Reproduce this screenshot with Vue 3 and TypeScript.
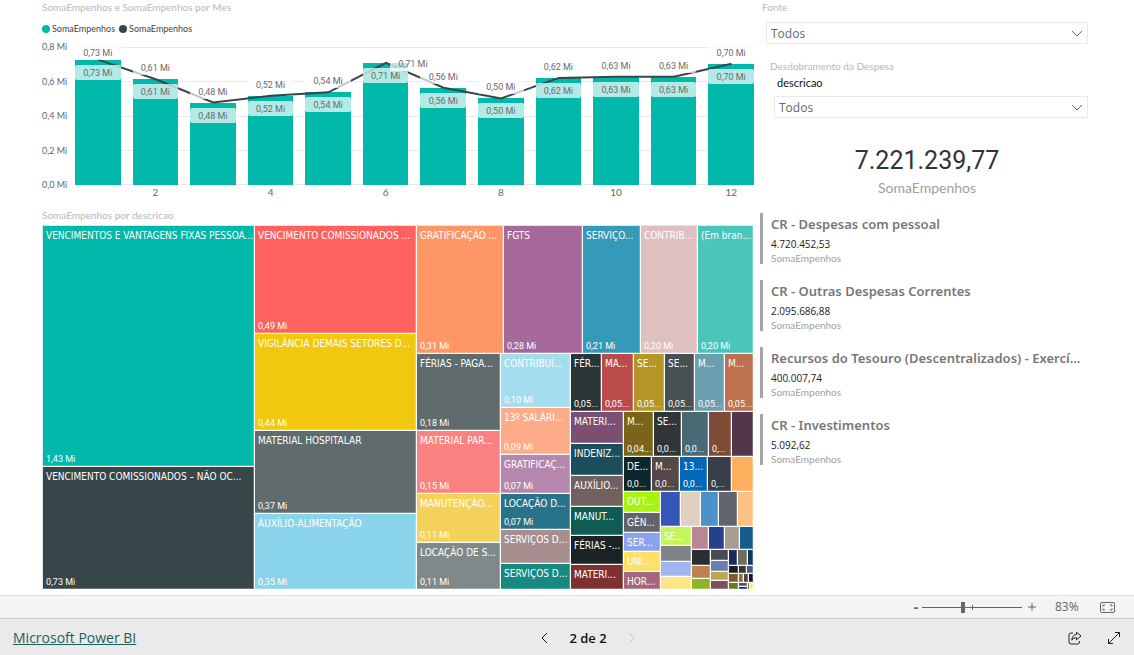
<script setup lang="ts">
import { computed, h, ref, type FunctionalComponent } from 'vue'

interface Leaf {
  size: number
  color: string
  name?: string
  value?: string
}
interface Group {
  size: number
  dir: 'row' | 'col'
  items: TreeNode[]
}
type TreeNode = Leaf | Group

const cell = (size: number, color: string, name?: string, value?: string): Leaf => ({ size, color, name, value })
const row = (size: number, ...items: TreeNode[]): Group => ({ size, dir: 'row', items })
const col = (size: number, ...items: TreeNode[]): Group => ({ size, dir: 'col', items })

const tinyCells = col(25,
  row(16, cell(9, '#1e2a5e'), cell(10, '#736a64'), cell(6, '#0d3a5c')),
  row(8, cell(10, '#1b1f26'), cell(8, '#33363c'), cell(7, '#4a5a85')),
  row(9, cell(10, '#805a33'), cell(5, '#8a7a30'), cell(5, '#5a3a44'), cell(5, '#0f1830')),
  row(7, cell(10, '#617d16'), col(9, cell(4, '#52565a'), cell(3, '#0f1fc4')), cell(2, '#3a3f70'), cell(4, '#f7f25c')),
)

const smallCells = col(62,
  row(23, cell(17, '#b88696'), cell(16, '#27408b'), cell(15, '#a89b90'), cell(14, '#175a8c')),
  row(40,
    col(19, cell(16, '#2a2e37'), cell(13, '#bd834a'), cell(11, '#8db526')),
    col(18, cell(11, '#484b54'), cell(11, '#6a7cb4'), cell(9, '#bda850'), cell(9, '#7d4f5e')),
    tinyCells,
  ),
)

const tree = row(1,
  col(212,
    cell(241, '#01b8aa', 'VENCIMENTOS E VANTAGENS FIXAS PESSOA...', '1,43 Mi'),
    cell(123, '#374649', 'VENCIMENTO COMISSIONADOS – NÃO OC...', '0,73 Mi'),
  ),
  col(162,
    cell(108, '#fd625e', 'VENCIMENTO COMISSIONADOS ...', '0,49 Mi'),
    cell(97, '#f2c80f', 'VIGILÂNCIA DEMAIS SETORES D...', '0,44 Mi'),
    cell(83, '#5f6b6d', 'MATERIAL HOSPITALAR', '0,37 Mi'),
    cell(76, '#8ad4eb', 'AUXÍLIO-ALIMENTAÇÃO', '0,35 Mi'),
  ),
  col(337,
    row(128,
      cell(87, '#fe9666', 'GRATIFICAÇÃO ...', '0,31 Mi'),
      cell(79, '#a66999', 'FGTS', '0,28 Mi'),
      cell(58, '#3599b8', 'SERVIÇO...', '0,21 Mi'),
      cell(57, '#dfbfbf', 'CONTRIB...', '0,20 Mi'),
      cell(56, '#4ac5bb', '(Em bran...', '0,20 Mi'),
    ),
    row(236,
      col(84,
        cell(77, '#5f6b6d', 'FÉRIAS - PAGA...', '0,18 Mi'),
        cell(63, '#fb8281', 'MATERIAL PAR...', '0,15 Mi'),
        cell(49, '#f4d25a', 'MANUTENÇÃO...', '0,11 Mi'),
        cell(47, '#7f898a', 'LOCAÇÃO DE S...', '0,11 Mi'),
      ),
      col(70,
        cell(54, '#a4ddee', 'CONTRIBUI...', '0,10 Mi'),
        cell(47, '#fdab89', '13º SALÁRI...', '0,09 Mi'),
        cell(39, '#b687ac', 'GRATIFICAÇ...', '0,07 Mi'),
        cell(36, '#28738a', 'LOCAÇÃO D...', '0,07 Mi'),
        cell(34, '#a78f8f', 'SERVIÇOS D...'),
        cell(26, '#168980', 'SERVIÇOS D...'),
      ),
      col(183,
        row(58,
          cell(31, '#293537', 'FÉR...', '0,05...'),
          cell(32, '#bb4a4a', 'MA...', '0,05...'),
          cell(31, '#b59525', 'SE...', '0,05...'),
          cell(30, '#475052', 'SE...', '0,05...'),
          cell(30, '#6a9fb0', 'M...', '0,05...'),
          cell(29, '#bd7150', 'M...', '0,05...'),
        ),
        row(178,
          col(53,
            cell(32, '#7b4f71', 'MATERI...'),
            cell(32, '#1b4d5c', 'INDENIZ...'),
            cell(31, '#706060', 'AUXÍLIO...'),
            cell(29, '#0f5c55', 'MANUT...'),
            cell(29, '#1c2325', 'FÉRIAS -...'),
            cell(25, '#7d3231', 'MATERI...'),
          ),
          col(130,
            row(45,
              cell(30, '#796419', 'M...', '0,04...'),
              cell(28, '#303637', 'SE...', '0,0...'),
              cell(27, '#476a75', '', '0,0...'),
              cell(23, '#7e4b36', '', '0,...'),
              cell(22, '#53354c'),
            ),
            row(35,
              cell(28, '#0e262e', 'DE...', '0,0...'),
              cell(28, '#544848', 'M...', '0,0...'),
              cell(28, '#0368b9', '13...', '0,0...'),
              cell(24, '#383d49', '', '0,...'),
              cell(22, '#ffb05f'),
            ),
            row(98,
              col(37,
                cell(21, '#a8f312', 'OUT...'),
                cell(20, '#60646d', 'GÊN...'),
                cell(19, '#8ba3ec', 'SER...'),
                cell(20, '#ffe066', 'UNI...'),
                cell(18, '#a6677c', 'HOR...'),
              ),
              col(93,
                row(35,
                  cell(20, '#3557b8'),
                  cell(20, '#dfd0c0'),
                  cell(18, '#4a92c8'),
                  cell(19, '#5f646d'),
                  cell(16, '#ffc083'),
                ),
                row(63,
                  col(31,
                    cell(19, '#c6f558', 'SE...'),
                    cell(16, '#7f8489'),
                    cell(15, '#a3b5ef'),
                    cell(13, '#ffe488'),
                  ),
                  smallCells,
                ),
              ),
            ),
          ),
        ),
      ),
    ),
  ),
)

const MapNode: FunctionalComponent<{ node: TreeNode }> = ({ node }) => {
  if ('items' in node) {
    const tracks = node.items.map((n) => `minmax(0, ${n.size}fr)`).join(' ')
    return h(
      'div',
      {
        class: 'group',
        style: node.dir === 'row' ? { gridTemplateColumns: tracks } : { gridTemplateRows: tracks },
      },
      node.items.map((n) => h(MapNode, { node: n })),
    )
  }
  return h('div', { class: 'leaf', style: { backgroundColor: node.color } }, [
    node.name ? h('span', { class: 'leaf-name' }, node.name) : null,
    node.value ? h('span', { class: 'leaf-value' }, node.value) : null,
  ])
}
MapNode.props = ['node']

const months = [
  { value: 0.727, label: '0,73 Mi', place: 'low' },
  { value: 0.613, label: '0,61 Mi', place: '' },
  { value: 0.478, label: '0,48 Mi', place: '' },
  { value: 0.518, label: '0,52 Mi', place: '' },
  { value: 0.537, label: '0,54 Mi', place: '' },
  { value: 0.708, label: '0,71 Mi', place: 'side' },
  { value: 0.564, label: '0,56 Mi', place: '' },
  { value: 0.502, label: '0,50 Mi', place: '' },
  { value: 0.621, label: '0,62 Mi', place: '' },
  { value: 0.628, label: '0,63 Mi', place: '' },
  { value: 0.627, label: '0,63 Mi', place: '' },
  { value: 0.703, label: '0,70 Mi', place: '' },
]
const maxValue = 0.8
const ticks = ['0,8 Mi', '0,6 Mi', '0,4 Mi', '0,2 Mi', '0,0 Mi']
const percent = (v: number) => `${(v / maxValue) * 100}%`

const linePoints = computed(() =>
  months.map((m, i) => `${23 + i * 57.5},${100 - (m.value / maxValue) * 100}`).join(' '),
)

const cards = [
  { title: 'CR - Despesas com pessoal', value: '4.720.452,53' },
  { title: 'CR - Outras Despesas Correntes', value: '2.095.686,88' },
  { title: 'Recursos do Tesouro (Descentralizados) - Exercí...', value: '400.007,74' },
  { title: 'CR - Investimentos', value: '5.092,62' },
]

const fonte = ref('Todos')
const descricao = ref('Todos')
const zoom = ref(41)
</script>

<template>
  <div class="page">
    <main class="report">
      <div class="visuals">
        <section class="chart">
          <h2 class="title">SomaEmpenhos e SomaEmpenhos por Mes</h2>
          <div class="legend">
            <span class="key"><i class="dot teal"></i>SomaEmpenhos</span>
            <span class="key"><i class="dot dark"></i>SomaEmpenhos</span>
          </div>
          <div class="chart-body">
            <div class="y-axis">
              <span v-for="t in ticks" :key="t">{{ t }}</span>
            </div>
            <div class="plot">
              <div class="gridlines"><i v-for="t in ticks" :key="t"></i></div>
              <div class="columns">
                <div v-for="(m, i) in months" :key="i" class="column">
                  <div class="bar" :style="{ height: percent(m.value) }">
                    <span class="band">{{ m.label }}</span>
                  </div>
                  <span class="point-label" :class="m.place" :style="{ bottom: percent(m.value) }">{{ m.label }}</span>
                </div>
              </div>
              <svg class="line" viewBox="0 0 678 100" preserveAspectRatio="none" aria-hidden="true">
                <polyline :points="linePoints" />
              </svg>
            </div>
          </div>
          <div class="x-axis">
            <span v-for="(m, i) in months" :key="i">{{ i % 2 ? i + 1 : '' }}</span>
          </div>
        </section>

        <section class="treemap">
          <h2 class="title">SomaEmpenhos por descricao</h2>
          <div class="map">
            <MapNode :node="tree" />
          </div>
        </section>
      </div>

      <aside class="side">
        <div class="slicer">
          <label class="title" for="fonte">Fonte</label>
          <div class="select-box">
            <select id="fonte" v-model="fonte"><option>Todos</option></select>
            <svg class="caret" viewBox="0 0 12 7" aria-hidden="true"><path d="M1 1l5 5 5-5" /></svg>
          </div>
        </div>
        <div class="slicer nested">
          <h2 class="title">Desdobramento da Despesa</h2>
          <label class="field" for="descricao">descricao</label>
          <div class="select-box">
            <select id="descricao" v-model="descricao"><option>Todos</option></select>
            <svg class="caret" viewBox="0 0 12 7" aria-hidden="true"><path d="M1 1l5 5 5-5" /></svg>
          </div>
        </div>
        <div class="total">
          <span class="total-value">7.221.239,77</span>
          <span class="total-label">SomaEmpenhos</span>
        </div>
        <ul class="cards">
          <li v-for="c in cards" :key="c.title" class="card">
            <h3>{{ c.title }}</h3>
            <span class="card-value">{{ c.value }}</span>
            <span class="card-label">SomaEmpenhos</span>
          </li>
        </ul>
      </aside>
    </main>

    <div class="zoom-bar">
      <button type="button" class="step" aria-label="Reduzir">-</button>
      <div class="range">
        <input v-model="zoom" type="range" min="0" max="100" aria-label="Zoom" />
      </div>
      <button type="button" class="step plus" aria-label="Ampliar">
        <svg width="8" height="8" viewBox="0 0 8 8"><path d="M4 0v8M0 4h8" /></svg>
      </button>
      <span class="percent">83%</span>
      <button type="button" class="fit" aria-label="Ajustar à página">
        <svg width="15" height="11" viewBox="0 0 15 11">
          <rect x="0.5" y="0.5" width="14" height="10" rx="1.5" />
          <path d="M3 4.500V3h2M10 3h2v1.500M12 6.500V8h-2M5 8H3V6.500" />
        </svg>
      </button>
    </div>

    <footer class="footer">
      <a href="#">Microsoft Power BI</a>
      <nav class="pager">
        <button type="button" aria-label="Página anterior">
          <svg width="7" height="12" viewBox="0 0 7 12"><path d="M6 1L1 6l5 5" /></svg>
        </button>
        <span>2 de 2</span>
        <button type="button" class="off" aria-label="Próxima página" disabled>
          <svg width="7" height="12" viewBox="0 0 7 12"><path d="M1 1l5 5-5 5" /></svg>
        </button>
      </nav>
      <div class="actions">
        <button type="button" aria-label="Compartilhar">
          <svg width="14" height="14" viewBox="0 0 14 14">
            <path d="M5 2H3a2 2 0 0 0-2 2v7a2 2 0 0 0 2 2h6.500a2 2 0 0 0 2-2v-1" />
            <path d="M8.500 1.200L13 5 8.500 8.800V6.700C6.500 6.700 5 7.300 3.800 9.200 4 6 5.500 3.700 8.500 3.400z" />
          </svg>
        </button>
        <button type="button" aria-label="Tela cheia">
          <svg width="14" height="14" viewBox="0 0 14 14">
            <path d="M1.500 12.500l11-11M8 1.500h4.500V6M1.500 8v4.500H6" />
          </svg>
        </button>
      </div>
    </footer>
  </div>
</template>

<style>
body {
  margin: 0;
}
</style>

<style scoped>
.page {
  display: flex;
  flex-direction: column;
  min-height: 100vh;
  background: #fff;
  color: #666;
  font-family: 'Open Sans', 'Noto Sans', sans-serif;
  font-size: 10px;
  line-height: 14px;
}
h2,
h3,
ul {
  margin: 0;
  padding: 0;
}
button {
  display: flex;
  align-items: center;
  justify-content: center;
  padding: 0;
  border: 0;
  background: none;
  font: inherit;
  color: inherit;
}
svg {
  fill: none;
  stroke: currentColor;
}
.title,
.legend,
.x-axis,
.card-label,
.field {
  font-family: Lato, 'Open Sans', sans-serif;
}
.title {
  display: block;
  font-size: 10px;
  font-weight: 400;
  line-height: 14px;
  color: #b8b8b8;
}
.report {
  flex: 1;
  display: grid;
  grid-template-columns: minmax(0, 712fr) minmax(0, 330fr);
  gap: 6px;
  padding: 0 44px 5px 42px;
}
.visuals {
  display: flex;
  flex-direction: column;
}
.legend {
  display: flex;
  gap: 4px;
  margin-top: 8px;
  font-size: 9px;
  color: #444;
}
.key {
  display: flex;
  align-items: center;
  gap: 2px;
}
.dot {
  width: 8px;
  height: 8px;
  border-radius: 50%;
}
.teal {
  background: #01b8aa;
}
.dark {
  background: #374649;
}
.chart-body {
  display: flex;
  gap: 8px;
  margin-top: 11px;
}
.y-axis {
  flex: none;
  display: flex;
  flex-direction: column;
  justify-content: space-between;
  width: 25px;
  margin: -7px 0;
  white-space: nowrap;
  font-family: Lato, 'Open Sans', sans-serif;
  font-size: 9px;
  color: #666;
}
.plot {
  position: relative;
  flex: 1;
  height: 138px;
}
.gridlines {
  position: absolute;
  inset: 0;
  display: flex;
  flex-direction: column;
  justify-content: space-between;
}
.gridlines i {
  height: 1px;
  background: #eaeaea;
}
.columns,
.x-axis {
  display: grid;
  grid-template-columns: repeat(12, minmax(0, 1fr));
  gap: 12px;
}
.columns {
  position: absolute;
  inset: 0;
}
.column {
  position: relative;
  display: flex;
  flex-direction: column;
  justify-content: flex-end;
}
.bar {
  box-sizing: border-box;
  padding-top: 5px;
  background: #01b8aa;
}
.band,
.point-label {
  display: block;
  height: 15px;
  border-radius: 2px;
  background: rgba(255, 255, 255, 0.7);
  font-family: Roboto, sans-serif;
  font-size: 9px;
  line-height: 17px;
  text-align: center;
  color: #6a6a6a;
}
.band {
  position: relative;
  z-index: 2;
}
.point-label {
  position: absolute;
  left: 0;
  right: 0;
  z-index: 2;
  margin-bottom: 4px;
}
.point-label.low {
  margin-bottom: 0;
}
.point-label.side {
  left: 60%;
  right: -60%;
  margin-bottom: -8px;
}
.line {
  position: absolute;
  inset: 0;
  z-index: 1;
  width: 100%;
  height: 100%;
}
.line polyline {
  stroke: #374649;
  stroke-width: 2;
  vector-effect: non-scaling-stroke;
}
.x-axis {
  margin: 0 0 0 33px;
  text-align: center;
  color: #666;
}
.x-axis span {
  height: 14px;
}
.treemap {
  flex: 1;
  display: flex;
  flex-direction: column;
  margin-top: 9px;
}
.map {
  flex: 1;
  display: grid;
  min-height: 363px;
  margin-top: 3px;
  border-top: 1px solid #e4e4e4;
  border-left: 1px solid #e4e4e4;
}
.map :deep(.group) {
  display: grid;
  min-width: 0;
  min-height: 0;
}
.map :deep(.leaf) {
  display: flex;
  flex-direction: column;
  justify-content: space-between;
  min-width: 0;
  min-height: 0;
  overflow: hidden;
  border-right: 1px solid #fff;
  border-bottom: 1px solid #fff;
  box-shadow: inset -1px -1px rgba(255, 255, 255, 0.25);
  white-space: nowrap;
  color: #fff;
}
.map :deep(.leaf-name) {
  padding: 3px 0 0 3px;
  font-family: 'DejaVu Sans Condensed', 'Open Sans', sans-serif;
}
.map :deep(.leaf-value) {
  margin-top: auto;
  padding: 0 0 1px 3px;
  font-family: Roboto, sans-serif;
  font-size: 9px;
  line-height: 12px;
}
.side {
  display: flex;
  flex-direction: column;
}
.slicer {
  padding: 0 2px 0 2px;
}
.slicer .select-box {
  margin: 8px 0 0 4px;
}
.nested {
  margin-top: 15px;
  padding-left: 10px;
}
.nested .field {
  display: block;
  margin: 2px 0 0 7px;
  line-height: 16px;
  font-size: 11px;
  color: #111;
}
.nested .select-box {
  margin: 5px 0 0 4px;
}
.select-box {
  position: relative;
}
select {
  display: block;
  width: 100%;
  height: 22px;
  padding: 1px 24px 0 4px;
  border: 1px solid #eaeaea;
  border-radius: 0;
  appearance: none;
  background: #fff;
  font: inherit;
  font-size: 12px;
  color: #666;
}
.caret {
  position: absolute;
  right: 5px;
  top: 8px;
  width: 12px;
  height: 7px;
  pointer-events: none;
}
.total {
  display: flex;
  flex-direction: column;
  align-items: center;
  margin-top: 27px;
  padding-left: 4px;
}
.total-value {
  font-family: Roboto, sans-serif;
  font-size: 25px;
  line-height: 32px;
  color: #333;
}
.total-label {
  margin-top: 2px;
  font-family: Lato, 'Open Sans', sans-serif;
  font-size: 14px;
  line-height: 18px;
  color: #a0a0a0;
}
.cards {
  display: flex;
  flex-direction: column;
  gap: 16px;
  margin-top: 16px;
  list-style: none;
}
.card {
  display: flex;
  flex-direction: column;
  height: 51px;
  padding-left: 8px;
  border-left: 3px solid #a6a6a6;
  white-space: nowrap;
}
.card h3 {
  font-family: 'Noto Sans', 'Open Sans', sans-serif;
  font-size: 13px;
  font-weight: 600;
  line-height: 22px;
  color: #777;
}
.card-value {
  font-size: 10px;
  line-height: 18px;
  color: #222;
}
.card-label {
  font-size: 10px;
  line-height: 10px;
  color: #a0a0a0;
}
.zoom-bar {
  display: flex;
  align-items: center;
  justify-content: flex-end;
  height: 22px;
  padding-right: 19px;
  border-top: 1px solid #e1e1e1;
  background: #f4f4f4;
  color: #666;
}
.step {
  width: 12px;
  height: 16px;
  font-size: 14px;
  font-weight: 700;
}
.plus {
  margin-left: 4px;
}
.range {
  position: relative;
  width: 100px;
  height: 12px;
}
.range::before {
  content: '';
  position: absolute;
  left: 50%;
  top: 4px;
  width: 1px;
  height: 5px;
  background: #666;
}
.range input {
  position: absolute;
  inset: 0;
  width: 100%;
  height: 12px;
  margin: 0;
  appearance: none;
  background: linear-gradient(#666, #666) center / 100% 1px no-repeat;
}
.range input::-webkit-slider-thumb {
  appearance: none;
  width: 4px;
  height: 11px;
  background: #666;
}
.percent {
  width: 26px;
  margin-left: 17px;
  font-size: 12px;
}
.fit {
  margin-left: 19px;
}
.footer {
  display: grid;
  grid-template-columns: 1fr auto 1fr;
  align-items: center;
  box-sizing: border-box;
  height: 37px;
  padding: 2px 13px 0 13px;
  border-top: 1px solid #c8c8c8;
  background: #eaeaea;
}
.footer a {
  font-size: 14px;
  line-height: 20px;
  color: #1c5f5b;
}
.pager {
  display: flex;
  align-items: center;
  gap: 21px;
  margin-left: 42px;
  font-size: 13px;
  font-weight: 600;
  color: #111;
}
.pager .off {
  color: #c4c4c4;
}
.actions {
  display: flex;
  justify-content: flex-end;
  gap: 25px;
  color: #222;
}
</style>
